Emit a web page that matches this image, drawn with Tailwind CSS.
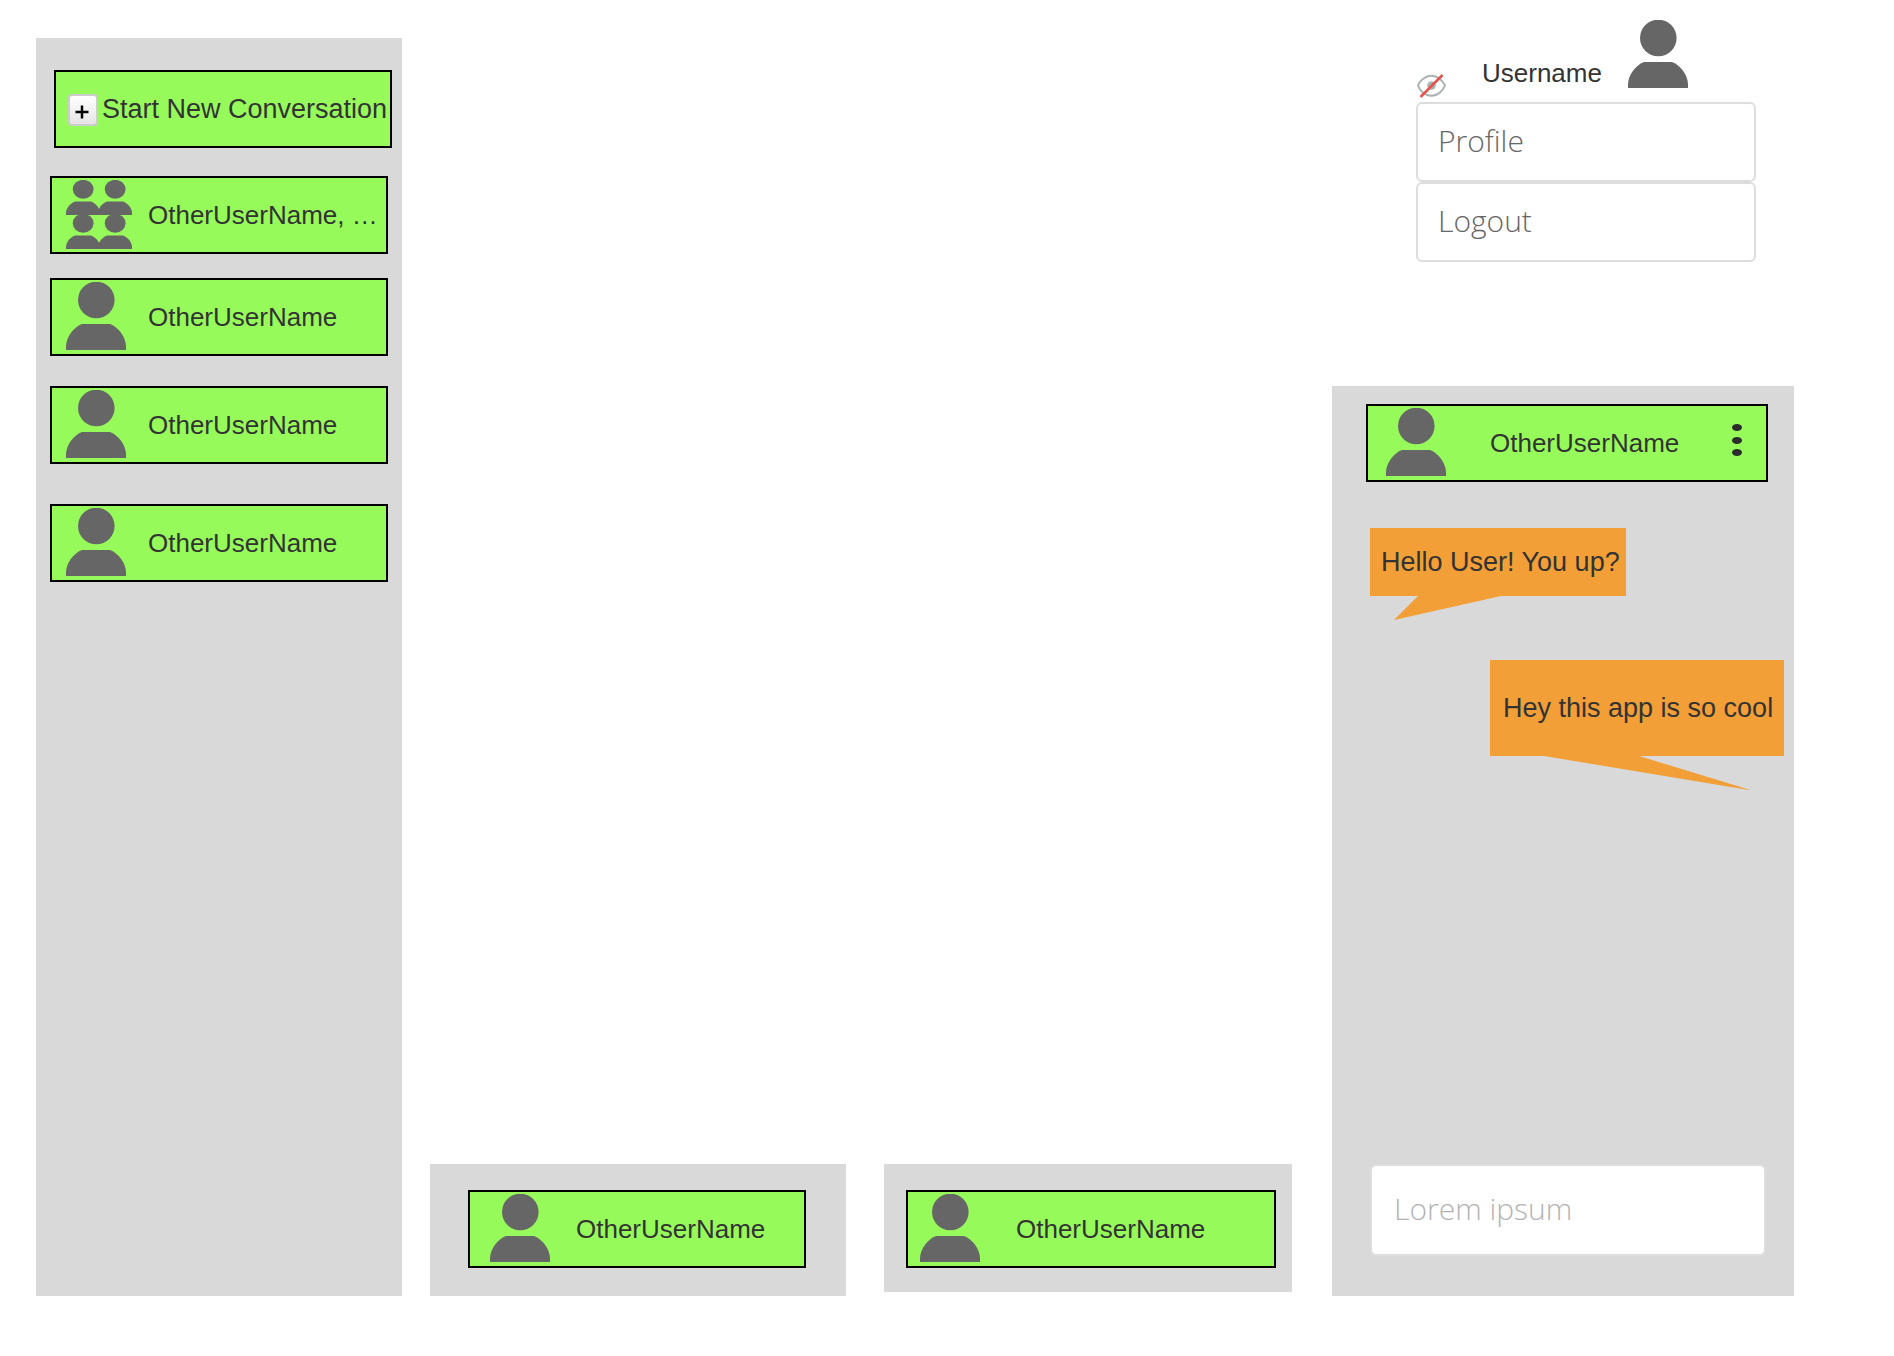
<!DOCTYPE html>
<html lang="en">
<head>
<meta charset="utf-8">
<meta name="viewport" content="width=device-width, initial-scale=1">
<title>Messenger</title>
<script src="https://cdn.jsdelivr.net/npm/@tailwindcss/browser@4"></script>
</head>
<body class="bg-white font-['Liberation_Sans',Arial,sans-serif] text-[26px] leading-8 text-[#333]">

<svg class="hidden" aria-hidden="true">
  <symbol id="avatar" viewBox="0 0 60 68" preserveAspectRatio="none">
    <circle cx="30.3" cy="18" r="18.3"/>
    <path d="M0 68V64C0.500 55 7 45.500 16 42H44C53 45.500 59.500 55 60 64V68Z"/>
  </symbol>
</svg>

<div class="flex min-h-screen pl-9 pr-[100px] pb-[60px]">

  <!-- Conversation list -->
  <nav class="mt-[38px] flex w-[366px] shrink-0 flex-col bg-[#d9d9d9] px-[14px] pt-8" aria-label="Conversations">
    <button class="ml-1 -mr-1 flex h-[78px] shrink-0 items-center border-2 border-black bg-[#96fb5a] pl-3 text-left text-[27px] whitespace-nowrap">
      <span class="mt-0.5 mr-1 flex h-8 w-[30px] shrink-0 items-center justify-center rounded border-2 border-[#ccc] bg-linear-to-b from-white to-[#e5e5e5]">
        <svg class="mt-1 mr-0.5 size-[14px]" viewBox="0 0 14 14" fill="none" stroke="#000" stroke-width="2.500"><path d="M.5 7H13.500M7 .5V13.500"/></svg>
      </span>
      Start New Conversation
    </button>

    <button class="mt-7 flex h-[78px] shrink-0 items-center border-2 border-black bg-[#96fb5a] pl-[14px] text-left whitespace-nowrap">
      <svg class="mr-4 h-[70px] w-[66px] shrink-0" viewBox="0 0 66 70" fill="#666">
        <use href="#avatar" x="0" y="0" width="34" height="35"/>
        <use href="#avatar" x="32" y="0" width="34" height="35"/>
        <use href="#avatar" x="0" y="34" width="34" height="35"/>
        <use href="#avatar" x="32" y="34" width="34" height="35"/>
      </svg>
      OtherUserName, …
    </button>

    <button class="mt-6 flex h-[78px] shrink-0 items-center border-2 border-black bg-[#96fb5a] pl-[14px] text-left">
      <svg class="mr-[22px] mb-0.5 h-[68px] w-[60px] shrink-0" fill="#666"><use href="#avatar"/></svg>
      OtherUserName
    </button>
    <button class="mt-[30px] flex h-[78px] shrink-0 items-center border-2 border-black bg-[#96fb5a] pl-[14px] text-left">
      <svg class="mr-[22px] mb-0.5 h-[68px] w-[60px] shrink-0" fill="#666"><use href="#avatar"/></svg>
      OtherUserName
    </button>
    <button class="mt-10 flex h-[78px] shrink-0 items-center border-2 border-black bg-[#96fb5a] pl-[14px] text-left">
      <svg class="mr-[22px] mb-0.5 h-[68px] w-[60px] shrink-0" fill="#666"><use href="#avatar"/></svg>
      OtherUserName
    </button>
  </nav>

  <!-- Minimised chats -->
  <main class="mx-7 mr-10 flex flex-1 items-end">
    <div class="grid flex-1 grid-cols-[416fr_408fr] items-start gap-[38px]">
      <section class="flex h-[132px] items-start bg-[#d9d9d9] pt-[26px] pr-10 pl-[38px]">
        <button class="flex h-[78px] flex-1 items-center border-2 border-black bg-[#96fb5a] pl-5 text-left">
          <svg class="mr-[26px] mb-0.5 h-[68px] w-[60px] shrink-0" fill="#666"><use href="#avatar"/></svg>
          OtherUserName
        </button>
      </section>
      <section class="flex h-32 items-start bg-[#d9d9d9] pt-[26px] pr-4 pl-[22px]">
        <button class="flex h-[78px] flex-1 items-center border-2 border-black bg-[#96fb5a] pl-3 text-left">
          <svg class="mr-9 mb-0.5 h-[68px] w-[60px] shrink-0" fill="#666"><use href="#avatar"/></svg>
          OtherUserName
        </button>
      </section>
    </div>
  </main>

  <aside class="flex w-[462px] shrink-0 flex-col">
    <!-- Account menu -->
    <div class="mr-[38px] ml-[84px] pt-5">
      <div class="flex h-[82px] items-start">
        <button class="mt-[54px]" aria-label="Toggle visibility">
          <svg class="h-6 w-[30px]" viewBox="0 0 30 24" fill="none">
            <path d="M2 11.500C3.500 7 9 1.800 15.500 1.800S27 7 29 11.500C27 16.500 22 21.800 15.500 21.800S3.500 16.500 2 11.500Z" stroke="#a9b3b1" stroke-width="2"/>
            <circle cx="15.500" cy="11.500" r="4.300" fill="#a9b3b1"/>
            <path d="M4.500 23L26.500 1" stroke="#e8504a" stroke-width="2.500"/>
          </svg>
        </button>
        <span class="mt-[37px] ml-9 flex-1">Username</span>
        <svg class="mr-[68px] h-[68px] w-[60px] shrink-0" fill="#666"><use href="#avatar"/></svg>
      </div>
      <a href="#profile" class="flex h-20 items-center rounded-md border-2 border-[#ddd] pb-0.5 pl-5 font-['Open_Sans',sans-serif] text-[30px] font-light text-[#666]">Profile</a>
      <a href="#logout" class="flex h-20 items-center rounded-md border-2 border-[#ddd] pb-0.5 pl-5 font-['Open_Sans',sans-serif] text-[30px] font-light text-[#666]">Logout</a>
    </div>

    <!-- Open chat -->
    <section class="mt-[124px] flex flex-1 flex-col bg-[#d9d9d9] pt-[18px] pb-10">
      <header class="mr-[26px] ml-[34px] flex h-[78px] items-center border-2 border-black bg-[#96fb5a] pl-[18px]">
        <svg class="mb-0.5 h-[68px] w-[60px] shrink-0" fill="#666"><use href="#avatar"/></svg>
        <span class="ml-11 flex-1">OtherUserName</span>
        <button class="mr-6" aria-label="Chat options">
          <svg class="mb-1.5 h-8 w-[10px]" viewBox="0 0 10 32" fill="#2b2b2b">
            <ellipse cx="5" cy="3.500" rx="5" ry="3.400"/>
            <ellipse cx="5" cy="16.500" rx="5" ry="3.400"/>
            <ellipse cx="5" cy="28.500" rx="5" ry="3.400"/>
          </svg>
        </button>
      </header>

      <div class="mt-[46px] flex flex-1 flex-col pr-[10px] pl-[38px] text-[27px] whitespace-nowrap">
        <div class="w-64 self-start">
          <p class="flex h-[68px] items-center bg-[#f29f38] pl-[11px]">Hello User! You up?</p>
          <svg class="h-6 w-full" viewBox="0 0 256 24" fill="#f29f38"><path d="M48 0H131L24 24Z"/></svg>
        </div>
        <div class="mt-10 w-[294px] self-end">
          <p class="flex h-24 items-center bg-[#f29f38] pl-[13px]">Hey this app is so cool</p>
          <svg class="h-[34px] w-full" viewBox="0 0 294 34" fill="#f29f38"><path d="M54 0H149L262 34.500Z"/></svg>
        </div>
      </div>

      <input type="text" aria-label="Message" placeholder="Lorem ipsum" class="mr-7 ml-[38px] h-[92px] rounded-md border-2 border-[#dedede] bg-white bg-clip-padding px-[22px] pb-1 font-['Open_Sans',sans-serif] text-[30px] font-light text-[#666] placeholder:text-[#b3b3b3]">
    </section>
  </aside>
</div>
</body>
</html>
